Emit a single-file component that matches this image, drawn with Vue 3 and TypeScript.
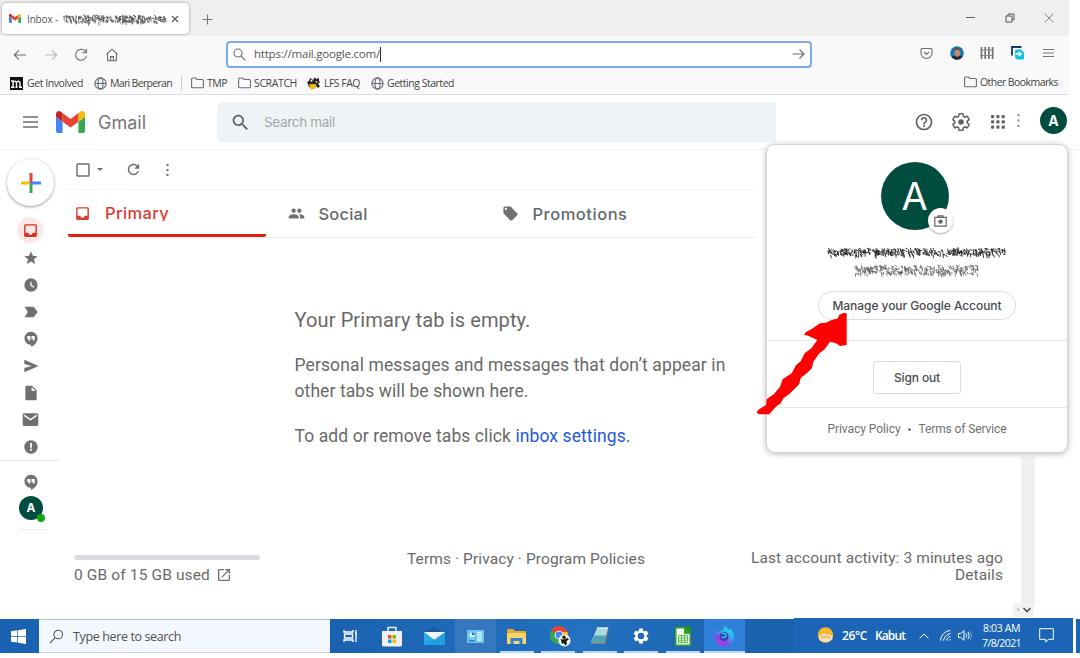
<script setup lang="ts">
import type { Directive } from 'vue'

interface RailItem { name: string; d: string; size: number }
interface Bookmark { label: string; icon: 'm' | 'globe' | 'folder' | 'bug'; cls: string; w: number }

const paths = {
  inbox: 'M19 3H4.99c-1.11 0-1.98.89-1.98 2L3 19c0 1.1.88 2 1.99 2H19c1.1 0 2-.9 2-2V5c0-1.11-.9-2-2-2zm0 12h-4c0 1.66-1.35 3-3 3s-3-1.34-3-3H4.99V5H19v10z',
  hangouts: 'M12 1C6.600 1 2.200 5.400 2.200 10.800S6.600 20.600 12 20.600V24c5.400-2.600 9.800-7.600 9.800-13.200C21.800 5.400 17.400 1 12 1zM11.200 11.600c0 1.600-.8 2.800-2.400 3.600v-2.800H6.400V7.600h4.800zm6.400 0c0 1.600-.8 2.800-2.400 3.600v-2.800h-2.400V7.600h4.800z',
  search: 'M15.500 14h-.79l-.28-.27C15.410 12.590 16 11.110 16 9.500 16 5.910 13.090 3 9.500 3S3 5.910 3 9.500 5.910 16 9.500 16c1.610 0 3.090-.59 4.230-1.570l.27.28v.79l5 4.990L20.490 19l-4.990-5zm-6 0C7.010 14 5 11.990 5 9.500S7.010 5 9.500 5 14 7.010 14 9.500 11.990 14 9.500 14z',
  refresh: 'M17.650 6.350C16.200 4.900 14.210 4 12 4c-4.420 0-7.990 3.580-7.990 8s3.570 8 7.990 8c3.730 0 6.840-2.550 7.730-6h-2.080c-.82 2.330-3.040 4-5.650 4-3.310 0-6-2.690-6-6s2.690-6 6-6c1.660 0 3.140.69 4.220 1.780L13 11h7V4l-2.350 2.350z',
  people: 'M16 11c1.660 0 2.990-1.340 2.990-3S17.660 5 16 5s-3 1.340-3 3 1.340 3 3 3zm-8 0c1.660 0 2.990-1.340 2.990-3S9.660 5 8 5 5 6.340 5 8s1.340 3 3 3zm0 2c-2.330 0-7 1.170-7 3.500V19h14v-2.500c0-2.330-4.670-3.500-7-3.500zm8 0c-.29 0-.62.02-.97.05 1.160.84 1.970 1.970 1.970 3.450V19h6v-2.500c0-2.330-4.670-3.500-7-3.500z',
  tag: 'M21.410 11.580l-9-9C12.050 2.220 11.550 2 11 2H4c-1.100 0-2 .9-2 2v7c0 .55.22 1.050.59 1.420l9 9c.36.36.86.58 1.410.58s1.050-.22 1.410-.59l7-7c.37-.36.59-.86.59-1.410s-.23-1.060-.59-1.420zM5.500 7C4.670 7 4 6.330 4 5.500S4.670 4 5.500 4 7 4.670 7 5.500 6.330 7 5.500 7z',
  gear: 'M19.430 12.980c.04-.32.07-.64.07-.98s-.03-.66-.07-.98l2.110-1.650c.19-.15.24-.42.12-.64l-2-3.460c-.12-.22-.39-.3-.61-.22l-2.490 1c-.52-.4-1.080-.73-1.690-.98l-.38-2.650C14.460 2.180 14.250 2 14 2h-4c-.25 0-.46.18-.49.42l-.38 2.650c-.61.25-1.170.59-1.690.98l-2.490-1c-.23-.09-.49 0-.61.22l-2 3.460c-.13.22-.07.49.12.64l2.110 1.650c-.04.32-.07.65-.07.98s.03.66.07.98l-2.110 1.650c-.19.15-.24.42-.12.64l2 3.460c.12.22.39.3.61.22l2.490-1c.52.4 1.080.73 1.690.98l.38 2.650c.03.24.24.42.49.42h4c.25 0 .46-.18.49-.42l.38-2.650c.61-.25 1.170-.59 1.690-.98l2.490 1c.23.09.49 0 .61-.22l2-3.460c.12-.22.07-.49-.12-.64l-2.110-1.650z',
  help: 'M11 18h2v-2h-2v2zm1-16C6.480 2 2 6.480 2 12s4.480 10 10 10 10-4.480 10-10S17.520 2 12 2zm0 18c-4.410 0-8-3.590-8-8s3.590-8 8-8 8 3.590 8 8-3.590 8-8 8zm0-14c-2.210 0-4 1.790-4 4h2c0-1.100.9-2 2-2s2 .9 2 2c0 2-3 1.750-3 5h2c0-2.250 3-2.500 3-5 0-2.210-1.790-4-4-4z',
  open: 'M19 19H5V5h7V3H5c-1.110 0-2 .9-2 2v14c0 1.100.89 2 2 2h14c1.100 0 2-.9 2-2v-7h-2v7zM14 3v2h3.590l-9.830 9.830 1.410 1.410L19 6.410V10h2V3h-7z',
}

const rail: RailItem[] = [
  { name: 'Starred', d: 'M12 17.270L18.180 21l-1.640-7.030L22 9.240l-7.190-.61L12 2 9.190 8.630 2 9.240l5.460 4.730L5.820 21z', size: 16 },
  { name: 'Snoozed', d: 'M12 2a10 10 0 1 0 0 20 10 10 0 0 0 0-20zm4.200 14.200L11 13V7h1.800v5l4.400 2.700z', size: 16 },
  { name: 'Important', d: 'M2.500 20H15c.7 0 1.300-.3 1.600-.8L22 12l-5.400-7.200C16.300 4.300 15.700 4 15 4H2.500l4.500 8z', size: 16 },
  { name: 'Chats', d: paths.hangouts, size: 16 },
  { name: 'Sent', d: 'M2 21.500L23.500 12 2 2.500V9l11 3-11 3z', size: 16 },
  { name: 'Drafts', d: 'M5.500 1C4.400 1 3.500 1.900 3.500 3v18c0 1.100.9 2 2 2h13c1.100 0 2-.9 2-2V8l-7-7h-8zm7.500 8V3l6 6z', size: 16 },
  { name: 'All mail', d: 'M21 3H3c-1.100 0-2 .9-2 2v14c0 1.100.9 2 2 2h18c1.100 0 2-.9 2-2V5c0-1.100-.9-2-2-2zm0 4.500l-9 6-9-6V5l9 6 9-6v2.500z', size: 17 },
  { name: 'Spam', d: 'M12 2C6.480 2 2 6.480 2 12s4.480 10 10 10 10-4.480 10-10S17.520 2 12 2zm1.400 15.500h-2.800v-2.800h2.800v2.800zm0-4.500h-2.800V6h2.800v7z', size: 16 },
]

const bookmarks: Bookmark[] = [
  { label: 'Get Involved', icon: 'm', cls: 'bm-a', w: 56 },
  { label: 'Mari Berperan', icon: 'globe', cls: 'bm-b', w: 62 },
  { label: 'TMP', icon: 'folder', cls: 'bm-c', w: 20 },
  { label: 'SCRATCH', icon: 'folder', cls: 'bm-d', w: 43 },
  { label: 'LFS FAQ', icon: 'bug', cls: 'bm-e', w: 36 },
  { label: 'Getting Started', icon: 'globe', cls: 'bm-f', w: 67 },
]

// Tracks a label's letters so that it spans the given number of pixels.
const vFit: Directive<HTMLElement, number> = {
  mounted(el, { value }) {
    const length = (el.textContent ?? '').trim().length
    el.style.letterSpacing = `${(value - el.getBoundingClientRect().width) / length}px`
  },
}

// Deterministic scribble that hides a private address.
function scribble(width: number, height: number, count: number, seed: number): string {
  let s = seed
  const rnd = () => {
    s = (s * 1103515245 + 12345) % 2147483648
    return s / 2147483648
  }
  let d = ''
  for (let i = 0; i < count; i++) {
    const x = rnd() * (width - 4) + 1
    const y = 1 + rnd() * (height - 4)
    const steep = rnd() < 0.5
    const dx = steep ? rnd() : 1 + rnd() * 2
    const dy = steep ? 2 + rnd() * 2 : rnd() * 2
    d += `M${x.toFixed(1)} ${y.toFixed(1)}l${dx.toFixed(1)} ${dy.toFixed(1)}`
  }
  return d
}
const tabScribble = scribble(106, 11, 260, 7)
const nameScribble = scribble(181, 11, 430, 21)
const mailScribble = scribble(127, 13, 330, 5)
</script>

<template>
  <div class="desktop">
    <div class="browser">
      <div class="tabstrip">
        <div class="tab">
          <svg class="i-tab" viewBox="52 42 88 66">
            <path d="M58 108h14V74L52 59v43c0 3.320 2.690 6 6 6" fill="#4285f4" />
            <path d="M120 108h14c3.320 0 6-2.690 6-6V59l-20 15" fill="#34a853" />
            <path d="M120 48v26l20-15v-8c0-7.420-8.470-11.650-14.400-7.200" fill="#fbbc04" />
            <path d="M72 74V48l24 18 24-18v26L96 92" fill="#ea4335" />
            <path d="M52 51v8l20 15V48l-5.600-4.200c-5.940-4.450-14.400-.22-14.400 7.200" fill="#c5221f" />
          </svg>
          <span class="tab-title"><span v-fit="31">Inbox -</span></span>
          <svg class="tab-mask" width="106" height="12"><path :d="tabScribble" stroke="#4a4a4a" stroke-width=".8" /></svg>
          <svg class="tab-close" width="8" height="8" viewBox="0 0 8 8"><path d="M1 1l6 6M7 1L1 7" stroke="#555" stroke-width="1.100" /></svg>
        </div>
        <svg class="new-tab" width="11" height="11" viewBox="0 0 11 11"><path d="M5.500 .5v10M.5 5.500h10" stroke="#777" stroke-width="1.100" /></svg>
        <div class="win">
          <span><svg width="10" height="10"><path d="M0 4.500h9" stroke="#666" /></svg></span>
          <span><svg width="10" height="10" fill="none" stroke="#555"><path d="M1 3h6v6H1zM3 2.800V1h6v6H7.200" /></svg></span>
          <span><svg width="10" height="10"><path d="M.5 .5l9 9M9.500 .5l-9 9" stroke="#777" stroke-width=".9" /></svg></span>
        </div>
      </div>

      <div class="navbar">
        <div class="nav-left">
          <span><svg width="14" height="14" viewBox="0 0 14 14" class="ln"><path d="M13 7H1.500M6 2.300L1.300 7 6 11.700" /></svg></span>
          <span><svg width="14" height="14" viewBox="0 0 14 14" class="ln dim"><path d="M1 7h11.500M8 2.300L12.700 7 8 11.700" /></svg></span>
          <span><svg width="14" height="14" viewBox="0 0 14 14" class="ln"><path d="M11.700 3.700A5.500 5.500 0 1 0 12.500 8M12.300 .8v4h-4" /></svg></span>
          <span><svg width="14" height="14" viewBox="0 0 14 14" class="ln"><path d="M1.500 6.500L7 1.200l5.500 5.300M2.600 6v6.800h8.800V6M5.500 12.800V8.600h3v4.200" /></svg></span>
        </div>
        <div class="url">
          <svg class="url-search" width="13" height="13" viewBox="0 0 13 13"><circle cx="5" cy="5" r="4" /><path d="M8 8l4.300 4.300" /></svg>
          <span class="url-text"><span v-fit="126">https://mail.google.com/</span></span><i class="caret"></i>
          <svg class="url-go" width="13" height="12" viewBox="0 0 13 12"><path d="M.5 6h11.500M7.500 1.500L12 6l-4.500 4.500" /></svg>
        </div>
        <div class="nav-right">
          <span><svg width="13" height="13" viewBox="0 0 13 13" class="ln"><path d="M2 1.500h9q1 0 1 1V6a5.500 5.500 0 0 1-11 0V2.500q0-1 1-1zM4 5l2.500 2.500L9 5" /></svg></span>
          <span><svg width="14" height="14" viewBox="0 0 14 14"><circle cx="7" cy="7" r="6.800" fill="#1579b8" /><path d="M1.500 11c1-1.500 3-1.500 5.500-1.500s4.500 0 5.500 1.500A7 7 0 0 1 1.500 11z" fill="#222c33" /><ellipse cx="7.300" cy="6.300" rx="3" ry="4.500" fill="#c08a74" /><path d="M4.300 5.500c-.3-5 6.200-5 6 0-1-2.500-5-2.500-6 0z" fill="#5d4a40" /></svg></span>
          <span><svg width="14" height="12" viewBox="0 0 14 12"><path d="M1.500 0v12M5.200 0v12M8.900 0v12M12.600 0v12" stroke="#6c6c6c" stroke-width="1.600" /><path d="M0 3h14M0 8.500h14" stroke="#8a8a8a" /></svg></span>
          <span><svg width="14" height="14" viewBox="0 0 14 14"><path d="M1 9.500V1h9.500" stroke="#12396c" stroke-width="1.800" fill="none" /><path d="M4 5q0-1.500 1.500-1.500h4.700L13 6.500V12q0 1.500-1.500 1.500H7Q4 13 4 10z" fill="#08c4dd" /><path d="M4.500 8h5M7.700 5.700L10.200 8l-2.500 2.300" stroke="#fff" stroke-width="1.400" fill="none" /></svg></span>
          <span><svg width="11" height="10"><path d="M0 1.500h11M0 5h11M0 8.500h11" stroke="#777" /></svg></span>
        </div>
      </div>

      <div class="bookmarks">
        <div v-for="b in bookmarks" :key="b.label" class="bm" :class="b.cls">
          <svg v-if="b.icon === 'm'" width="13" height="13" viewBox="0 0 13 13"><path d="M0 0h13v13H0z" fill="#111" /><path d="M1 4h2v6M1 10.200h3.500M3 6c0-2 3.500-2.500 3.500 0v4M5.500 10.200h2M6.500 6c0-2 3.500-2.500 3.500 0v4M9 10.200h3" stroke="#fff" stroke-width="1.400" fill="none" /></svg>
          <svg v-else-if="b.icon === 'globe'" width="13" height="13" viewBox="0 0 13 13" class="ln"><circle cx="6.500" cy="6.500" r="5.600" /><ellipse cx="6.500" cy="6.500" rx="2.500" ry="5.600" /><path d="M1 6.500h11" /></svg>
          <svg v-else-if="b.icon === 'folder'" width="13" height="12" viewBox="0 0 13 12" class="ln"><path d="M.6 9.800V2q0-1 1-1h2.900l1.500 1.500h5.400q1 0 1 1v6.300q0 1-1 1H1.600q-1 0-1-1z" /></svg>
          <svg v-else width="13" height="13" viewBox="0 0 13 13"><path d="M0 5l2-1 1-3 3 2 2-3 1 2 3-1v3l1 1-2 2 2 2-2 2-2-2-4 3-3-2-1-3z" fill="#262626" /><circle cx="4.500" cy="3.800" r="1" fill="#fff" /><circle cx="9.500" cy="5" r=".9" fill="#ddd" /><path d="M2.500 7h6l1 2-2 3-3 .5-2-2z" fill="#e9b91c" /></svg>
          <span v-fit="b.w">{{ b.label }}</span>
        </div>
        <div class="bm bm-other">
          <svg width="13" height="12" viewBox="0 0 13 12" class="ln"><path d="M.6 9.800V2q0-1 1-1h2.900l1.500 1.500h5.400q1 0 1 1v6.300q0 1-1 1H1.600q-1 0-1-1z" /></svg>
          <span v-fit="78">Other Bookmarks</span>
        </div>
      </div>
    </div>

    <header class="gm-head">
      <svg class="burger" width="15" height="12"><path d="M0 1h15M0 6h15M0 11h15" stroke="#6a6e72" stroke-width="1.500" /></svg>
      <svg class="i-gmail" viewBox="52 42 88 66">
        <path d="M58 108h14V74L52 59v43c0 3.320 2.690 6 6 6" fill="#4285f4" />
        <path d="M120 108h14c3.320 0 6-2.690 6-6V59l-20 15" fill="#34a853" />
        <path d="M120 48v26l20-15v-8c0-7.420-8.470-11.650-14.400-7.200" fill="#fbbc04" />
        <path d="M72 74V48l24 18 24-18v26L96 92" fill="#ea4335" />
        <path d="M52 51v8l20 15V48l-5.600-4.200c-5.940-4.450-14.400-.22-14.400 7.200" fill="#c5221f" />
      </svg>
      <div class="brand"><span v-fit="48">Gmail</span></div>
      <div class="search">
        <svg width="21" height="21" viewBox="0 0 24 24" fill="#5f6368"><path :d="paths.search" /></svg>
        <span v-fit="71">Search mail</span>
      </div>
      <div class="head-icons">
        <span><svg width="20" height="20" viewBox="0 0 24 24" fill="#5f6368"><path :d="paths.help" /></svg></span>
        <span><svg width="20" height="20" viewBox="0 0 24 24"><path :d="paths.gear" fill="none" stroke="#5f6368" stroke-width="1.800" /><circle cx="12" cy="12" r="3.300" fill="#5f6368" /></svg></span>
        <span><svg width="14" height="14" fill="#5f6368"><g v-for="r in 3" :key="r"><rect v-for="c in 3" :key="c" :x="(c - 1) * 5.3" :y="(r - 1) * 5.3" width="3.200" height="3.200" rx="1" /></g></svg></span>
      </div>
      <svg class="dots3" width="3" height="14"><path d="M.5 0h2v2h-2zM.5 5.500h2v2h-2zM.5 11h2v2h-2z" fill="#888" /></svg>
      <div class="me">A</div>
    </header>

    <main class="gm-body">
      <nav class="rail">
        <div class="compose"><svg width="20" height="20" viewBox="0 0 20 20"><path d="M8.500 0h3v10h-3z" fill="#ea4335" /><path d="M8.500 10h3v10h-3z" fill="#34a853" /><path d="M0 8.500h8.500v3H0z" fill="#fbbc04" /><path d="M10 8.500h10v3H11.500L10 10z" fill="#4285f4" /></svg></div>
        <div class="rail-on"><svg width="17" height="17" viewBox="0 0 24 24" fill="#d93025"><path :d="paths.inbox" /></svg></div>
        <div v-for="r in rail" :key="r.name" class="rail-item">
          <svg :width="r.size" :height="r.size" viewBox="0 0 24 24"><path :d="r.d" fill-rule="evenodd" /></svg>
        </div>
        <div class="rail-line"></div>
        <div class="rail-chat"><svg width="16" height="16" viewBox="0 0 24 24"><path :d="paths.hangouts" fill-rule="evenodd" /></svg></div>
        <div class="rail-me">A<i></i></div>
        <div class="rail-line short"></div>
      </nav>

      <section class="content">
        <div class="tools">
          <svg class="t-check" width="18" height="18" viewBox="0 0 24 24" fill="#707070"><path d="M19 5v14H5V5h14m0-2H5c-1.100 0-2 .9-2 2v14c0 1.100.9 2 2 2h14c1.100 0 2-.9 2-2V5c0-1.100-.9-2-2-2z" /></svg>
          <svg class="t-drop" width="6" height="3"><path d="M0 0h6L3 3z" fill="#707070" /></svg>
          <svg class="t-refresh" width="17" height="17" viewBox="0 0 24 24" fill="#707070"><path :d="paths.refresh" /></svg>
          <svg class="t-more" width="3" height="12"><path d="M.5 0h2v2h-2zM.5 5h2v2h-2zM.5 10h2v2h-2z" fill="#707070" /></svg>
        </div>
        <div class="cats">
          <div class="cat on"><svg width="17" height="17" viewBox="0 0 24 24"><path :d="paths.inbox" /></svg><span v-fit="64">Primary</span></div>
          <div class="cat"><svg width="17" height="17" viewBox="0 0 24 24"><path :d="paths.people" /></svg><span v-fit="49">Social</span></div>
          <div class="cat"><svg width="17" height="17" viewBox="0 0 24 24"><path :d="paths.tag" /></svg><span v-fit="95">Promotions</span></div>
        </div>
        <div class="empty">
          <h1><span v-fit="236">Your Primary tab is empty.</span></h1>
          <p><span v-fit="431">Personal messages and messages that don’t appear in</span><br /><span v-fit="234">other tabs will be shown here.</span></p>
          <p><span v-fit="336">To add or remove tabs click <a>inbox settings</a>.</span></p>
        </div>
        <footer class="foot">
          <div class="quota">
            <div class="bar"></div>
            <div class="used"><span v-fit="136">0 GB of 15 GB used</span><svg width="16" height="16" viewBox="0 0 24 24" fill="#707070"><path :d="paths.open" /></svg></div>
          </div>
          <div class="legal"><span v-fit="238">Terms · Privacy · Program Policies</span></div>
          <div class="activity"><span v-fit="252">Last account activity: 3 minutes ago</span><br /><span v-fit="48">Details</span></div>
        </footer>
      </section>
    </main>

    <div class="taskbar">
      <div class="start"><svg width="15" height="15" viewBox="0 0 15 15" fill="#fff"><path d="M0 2.200l6.300-.9v5.800H0zM7 1.200L15 0v7.100H7zM0 7.800h6.300v5.800L0 12.800zM7 7.800h8V15l-8-1.200z" /></svg></div>
      <div class="tb-search">
        <svg width="15" height="15" viewBox="0 0 15 15" fill="none" stroke="#555" stroke-width="1.100"><circle cx="9.200" cy="5.500" r="4.300" /><path d="M6 8.800L1 14" /></svg>
        <span v-fit="108">Type here to search</span>
      </div>
      <div class="apps">
        <div class="app"><svg width="15" height="14" viewBox="0 0 15 14" fill="none" stroke="#fff" stroke-width="1.300"><path d="M1 1v2h9V1M1 13v-2h9v2M1.500 5h8v4h-8zM13 1v12M12 4.500h2" /></svg></div>
        <div class="app"><svg width="20" height="21" viewBox="0 0 20 21"><path d="M6 6V1.500h8V6" stroke="#e8eef5" stroke-width="1.500" fill="none" /><path d="M0 5h20v14q0 1.500-1.500 1.500h-17Q0 20.500 0 19z" fill="#f1f1f1" /><path d="M6 9h3.500v3.500H6z" fill="#f25022" /><path d="M10.500 9H14v3.500h-3.500z" fill="#7fba00" /><path d="M6 13.500h3.500V17H6z" fill="#00a4ef" /><path d="M10.500 13.500H14V17h-3.500z" fill="#ffb900" /></svg></div>
        <div class="app mail"><svg width="21" height="19" viewBox="0 0 21 19"><path d="M0 6L10.500 0 21 6z" fill="#175a9f" /><path d="M0 5h21v13H0z" fill="#29a9ea" /><path d="M0 5h21l-10.500 8z" fill="#f2f6fa" /><path d="M0 18L21 6v12z" fill="#1b8fdc" opacity=".5" /></svg></div>
        <div class="app soft"><svg width="17" height="13" viewBox="0 0 17 13"><rect width="17" height="13" rx="1" fill="#6cc6f2" /><circle cx="5" cy="5" r="2.600" fill="#d7f0fb" /><path d="M5 5V2.400A2.600 2.600 0 0 1 7.600 5z" fill="#2a6db4" /><path d="M2 10h6v1.500H2z" fill="#2a7fc4" /><path d="M10 2.500h5M10 5h5M10 7.500h5M10 10h5" stroke="#e8f7fd" stroke-width="1.300" /></svg></div>
        <div class="app run"><svg width="19" height="17" viewBox="0 0 19 17"><path d="M0 2q0-1 1-1h5l2 2h10q1 0 1 1v11H0z" fill="#e8ab2c" /><path d="M0 5h19v11H0z" fill="#fbd56c" /><path d="M3.500 16v-6h12v6h-3v-3h-6v3z" fill="#2f86d4" /></svg></div>
        <div class="app run chrome"><svg width="21" height="21" viewBox="0 0 21 21"><circle cx="9" cy="9" r="9" fill="#e94335" /><path d="M9 9L1.200 4.500A9 9 0 0 0 9 18l4-6.700z" fill="#33a853" /><path d="M9 18a9 9 0 0 0 8.400-12H9l4 5.300z" fill="#fbc116" /><circle cx="9" cy="9" r="4.300" fill="#fff" /><circle cx="9" cy="9" r="3.400" fill="#4285f4" /><circle cx="14.500" cy="14.500" r="6" fill="#f4f4f4" /><circle cx="14" cy="11.200" r="1.700" fill="#1b1b1b" /><path d="M10.500 13l3 .5 4-1.500 1.500 1.500-2.500 1.500.5 3-2 1.500-1-2.500-2 1-.5-2z" fill="#1b1b1b" /></svg></div>
        <div class="app run"><svg width="18" height="18" viewBox="0 0 18 18"><path d="M6 1h12l-4 16H1z" fill="#8b7d6a" /><path d="M6 1h11l-4 14.500H0z" fill="#a9dbe0" /><path d="M3.500 8.500L0 15.500h13l2-7z" fill="#4fa3b3" /><path d="M6 1h11" stroke="#e8e8e8" stroke-width="1.500" /></svg></div>
        <div class="app run"><svg width="18" height="18" viewBox="0 0 24 24"><path :d="paths.gear" fill="#fff" /><circle cx="12" cy="12" r="4.400" fill="#1f68b5" /></svg></div>
        <div class="app run"><svg width="16" height="20" viewBox="0 0 16 20"><path d="M0 1h10l6 6v13H0z" fill="#31a51c" /><path d="M1.500 2.500H9V8h5.500v10.500h-13z" fill="#f3fbf1" /><path d="M10 0h6v6z" fill="#1f8f14" /><path d="M3.500 9.500h9v7h-9zM3.500 12h9M3.500 14.200h9M6.500 9.500v7M9.500 9.500v7" fill="none" stroke="#5cc24c" /></svg></div>
        <div class="app run hot"><svg width="20" height="20" viewBox="0 0 20 20"><defs><linearGradient id="fx" x1="0.900" y1="0" x2="0.300" y2="1"><stop offset="0" stop-color="#2fe6e0" /><stop offset=".4" stop-color="#2bb0f0" /><stop offset=".75" stop-color="#8a48e8" /><stop offset="1" stop-color="#b03be8" /></linearGradient></defs><path d="M11 0c2 1 2.500 3 4 4 .5-.5.500-1 .500-2C18.500 4 20 7 20 10.500a9.700 9.700 0 0 1-19.500 0C.5 8 1.500 5.500 3 4c.5 1 1 1.500 2 1.800C6.500 5 9.500 4 11 0z" fill="url(#fx)" /><circle cx="10" cy="10.500" r="4.500" fill="#3b3fae" /><path d="M7.500 7.500c3-1 5.500 1 4 3.300-1 1.300-3 .9-4-.1" stroke="#29c8e8" stroke-width="1.600" fill="none" /></svg></div>
      </div>
      <div class="tray">
        <svg class="sun" width="17" height="17" viewBox="0 0 17 17"><circle cx="8.500" cy="8" r="7.700" fill="#f8b62d" /><path d="M3 13.500a3 3 0 0 1 .5-5 4 4 0 0 1 6.500-.5 3 3 0 0 1 4 5.500q-5 3.500-11 0z" fill="#f7dfb6" /><path d="M4 10.800q4-2 9 0" stroke="#d9a04c" stroke-width="1.100" fill="none" /></svg>
        <div class="wx"><span v-fit="25">26°C</span></div>
        <div class="wx k"><span v-fit="30">Kabut</span></div>
        <svg class="up" width="10" height="6" viewBox="0 0 10 6"><path d="M.5 5.500L5 1l4.500 4.500" /></svg>
        <svg class="wifi" width="11" height="11" viewBox="0 0 11 11"><path d="M.5 10.500C1 5 5 1 10.500 .5M3.500 10.500c.5-3.500 3-6 7-7M6.500 10.500c.3-2 1.700-3.700 4-4M9 10.500l1.500-1.500" /></svg>
        <svg class="vol" width="14" height="11" viewBox="0 0 14 11"><path d="M.5 3.500h2.200L6 .7v9.600L2.700 7.500H.5zM8 3.500q1.300 2 0 4M10 2q2.300 3.500 0 7" /><path d="M12 .8q3 4.700 0 9.400" opacity=".4" /></svg>
        <div class="clock"><span v-fit="37">8:03 AM</span><br /><span v-fit="39">7/8/2021</span></div>
        <svg class="note" width="15" height="15" viewBox="0 0 15 15"><path d="M.7 .7h13.600v10.600H9.500L6.700 14v-2.700h-6z" /></svg>
      </div>
      <div class="edge"></div>
    </div>

    <div class="track"></div>
    <div class="track-end"><svg width="14" height="6"><path d="M6.500 1L10 4.500 13.500 1" stroke="#555" stroke-width="1.700" fill="none" /><path d="M.5 1.500L2 3.500" stroke="#777" /></svg></div>

    <aside class="popup">
      <div class="big">A<div class="cam"><svg width="13" height="12" viewBox="0 0 13 12" fill="none" stroke="#666" stroke-width="1.200"><path d="M.8 2.300h11.400v8.900H.8zM4 2V.8h5V2" /><circle cx="6.500" cy="6.600" r="2.200" fill="#666" stroke="none" /></svg></div></div>
      <svg class="mask1" width="181" height="12"><path :d="nameScribble" stroke="#2c2c2c" stroke-width=".9" /></svg>
      <svg class="mask2" width="127" height="13"><path :d="mailScribble" stroke="#555" stroke-width=".7" /></svg>
      <div class="manage"><span v-fit="169">Manage your Google Account</span></div>
      <div class="out"><div class="out-btn"><span v-fit="46">Sign out</span></div></div>
      <div class="pp"><span v-fit="73">Privacy Policy</span><b></b><span v-fit="88">Terms of Service</span></div>
    </aside>

    <svg class="arrow" width="110" height="130" viewBox="0 0 330 390">
      <path d="M290 70V165L270 168 258 160 240 155 224 178 208 190 190 215 186 234 172 248 152 264 148 282 130 300 118 312 100 325 92 340 76 352 58 373H28L20 368 24 360 48 345 50 328 72 312 90 290 98 268 125 250 138 226 152 214 164 190 184 175 202 150 176 138 162 134 168 126 186 116 210 100 228 98 245 90 262 86 268 74 280 69z" fill="#f00" />
    </svg>
  </div>
</template>

<style>
html,
body {
  margin: 0;
  background: #fff;
}
</style>

<style scoped>
.desktop {
  position: relative;
  display: flex;
  flex-direction: column;
  width: 1080px;
  height: 658px;
  overflow: hidden;
  background: #fff;
  color: #696969;
  font-family: Roboto, 'Liberation Sans', sans-serif;
  white-space: nowrap;
}
svg { display: block; flex: none; }
.browser { width: 1069px; height: 95px; font-family: 'Open Sans', 'Noto Sans', sans-serif; }
.tabstrip { display: flex; height: 36px; background: #efefef; }
.tab { display: flex; align-items: center; box-sizing: border-box; width: 187px; height: 31px; margin: 3px 0 0 2px; padding-left: 7px; border-radius: 4px; background: #fff; box-shadow: 0 0 3px rgba(0, 0, 0, 0.4); }
.i-tab { width: 12px; height: 9px; }
.tab-title { width: 35px; margin-left: 6px; color: #555; font-size: 10px; line-height: 30px; }
.tab-mask { margin-top: 2px; }
.tab-close { margin-left: 3px; }
.new-tab { margin: 14px 0 0 13px; }
.win { display: flex; align-items: center; margin: 0 1px 0 auto; }
.win span { display: flex; justify-content: center; width: 39px; }
.ln { fill: none; stroke: #6b6b75; stroke-width: 1.1; }
.dim { opacity: 0.45; }
.navbar { display: flex; align-items: center; height: 36px; background: #f9f9fb; }
.nav-left { display: flex; width: 221px; padding-left: 5px; margin-top: 1px; }
.nav-left span,
.nav-right span { display: flex; align-items: center; justify-content: center; width: 30.5px; }
.url { display: flex; align-items: center; box-sizing: border-box; width: 586px; height: 27px; padding: 0 5px; border: 2px solid #7aaaf0; border-radius: 4px; background: #fff; }
.url-search, .url-go { fill: none; stroke: #6b6b75; stroke-width: 1.1; }
.url-text { margin-left: 8px; color: #555; font-size: 11.5px; line-height: 22px; }
.caret { width: 1px; height: 15px; background: #333; }
.url-go { margin-left: auto; }
.nav-right { display: flex; align-items: center; height: 34px; margin: 0 0 2px 99px; }
.bookmarks { display: flex; align-items: center; box-sizing: border-box; height: 23px; padding-left: 10px; border-bottom: 1px solid #dedee2; background: #f9f9fb; }
.bm { display: flex; align-items: center; gap: 4px; color: #444; font-size: 10.5px; line-height: 20px; }
.bm-a { width: 84px; }
.bm-b { gap: 3px; width: 87px; height: 15px; margin-right: 9px; border-right: 1px solid #ccccd2; }
.bm-c { width: 47px; gap: 3px; }
.bm-d { width: 69px; gap: 3px; }
.bm-e { width: 64px; }
.bm-f { gap: 3px; }
.bm-other { gap: 3px; margin: 0 11px 2px auto; }

.gm-head { display: flex; align-items: center; box-sizing: border-box; height: 55px; border-bottom: 1px solid #f3f3f3; }
.burger { margin-left: 23px; }
.i-gmail { width: 29px; height: 22px; margin-left: 18px; }
.brand { width: 119px; margin: 2px 0 0 13px; color: #72767a; font: 18px/40px Inter, sans-serif; }
.search { display: flex; align-items: center; width: 559px; height: 40px; border-radius: 6px 0 0 6px; background: #eff3f5; color: #a3a7aa; font: 13.5px/42px Inter, sans-serif; }
.search svg { margin: 0 13px 0 13px; }
.head-icons { display: flex; margin-left: 129px; }
.head-icons span { display: flex; align-items: center; justify-content: center; width: 37.3px; }
.dots3 { margin-top: -3px; }
.me { width: 27px; height: 27px; margin: -4px 0 0 20px; border-radius: 50%; background: #004d40; color: #fff; font: 700 14px/27px Inter, sans-serif; text-align: center; }

.gm-body { display: flex; height: 469px; }
.rail { display: flex; flex-direction: column; width: 62px; fill: #707070; }
.compose { display: flex; align-items: center; justify-content: center; width: 47px; height: 47px; margin: 9px 0 0 7px; border-radius: 50%; box-shadow: 0 1px 3px rgba(0, 0, 0, 0.4); }
.rail-on { display: flex; align-items: center; justify-content: center; width: 26px; height: 26px; margin: 11px 0 1px 17px; border-radius: 50%; background: #fce8e6; }
.rail-item { display: flex; align-items: center; justify-content: center; width: 61px; height: 27px; }
.rail-line { width: 60px; height: 1px; background: #ebebeb; }
.rail-chat { display: flex; justify-content: center; width: 61px; margin-top: 13px; }
.rail-me { position: relative; width: 24px; height: 24px; margin: 6px 0 9px 19px; border-radius: 50%; background: #004d40; color: #fff; font: 700 12px/24px Inter, sans-serif; text-align: center; }
.rail-me i { position: absolute; left: 18px; top: 18px; width: 8px; height: 8px; border-radius: 50%; background: #12a812; }
.short { width: 28px; margin-left: 19px; }

.content { display: flex; flex-direction: column; width: 1018px; }
.tools { display: flex; align-items: center; box-sizing: border-box; width: 695px; height: 40px; padding-left: 12px; border-bottom: 1px solid #f3f3f3; }
.t-drop { margin-left: 5px; }
.t-refresh { margin-left: 22px; }
.t-more { margin-left: 24px; }
.cats { display: flex; box-sizing: border-box; width: 695px; height: 48px; padding-left: 6px; border-bottom: 1px solid #f0f0f0; }
.cat { display: flex; align-items: center; box-sizing: border-box; width: 198px; height: 47px; margin-right: 16px; padding-left: 6px; color: #65696d; fill: #707070; font: 500 16.5px/44px Inter, sans-serif; }
.cat svg { margin-right: 13.5px; }
.cat.on { border-bottom: 3px solid #dd1f12; border-radius: 2px; color: #dc3a30; fill: #dc3a30; line-height: 46px; }
.cat.on svg { margin-top: 3px; margin-right: 14px; }
.cat.on span { margin-top: 2px; clip-path: inset(0 0 15px 0); }
.empty { height: 257px; padding: 69px 0 0 232.5px; box-sizing: border-box; margin-bottom: 60px; }
h1 { margin: 0; font-size: 20px; font-weight: 400; line-height: 26px; }
p { margin: 19px 0 0; font-size: 17.5px; line-height: 26px; }
a { color: #2259dc; }
.foot { display: flex; width: 941px; font-size: 15.5px; }
.quota { width: 186px; margin-left: 12px; }
.bar { height: 5px; border-radius: 3px; background: #dadce0; }
.used { display: flex; align-items: center; gap: 6px; margin-top: 5px; line-height: 20px; }
.legal { margin-left: 147px; line-height: 8px; }
.activity { margin-left: auto; margin-top: -5px; line-height: 17px; text-align: right; }

.taskbar { display: flex; height: 34px; color: #fff; font-family: 'Open Sans', 'Noto Sans', sans-serif; }
.start { display: flex; align-items: center; justify-content: center; box-sizing: border-box; width: 39px; padding-right: 2px; background: #1b63b2; }
.tb-search { display: flex; align-items: center; box-sizing: border-box; width: 291px; gap: 9px; padding-left: 10px; border-top: 1px solid #b9bdc2; border-bottom: 1px solid #c9d2dc; background: #f3f8fe; color: #505050; font-size: 12.5px; }
.apps { display: flex; width: 464px; background: linear-gradient(90deg, #1a62b0, #2371c0 55%, #1c64b0 85%, #1a62ae); }
.app { display: flex; align-items: center; justify-content: center; box-sizing: border-box; width: 41.5px; height: 34px; }
.app.mail { padding-left: 2px; }
.app.chrome { padding-left: 4px; }
.app.soft { background: #3677bf; }
.run { background: linear-gradient(#b9d9f8, #b9d9f8) center bottom / 34px 2px no-repeat; }
.hot { background: linear-gradient(#b9d9f8, #b9d9f8) center bottom / 41px 2px no-repeat #2f80d8; }
.tray { display: flex; align-items: center; box-sizing: border-box; width: 279px; height: 35px; margin-top: -1px; padding-left: 23px; background: #1c65b6; fill: none; stroke: #fff; }
.sun { stroke: none; }
.wx { width: 33px; margin-left: 8px; font-size: 12px; font-weight: 600; }
.k { width: 44px; margin-left: 0; }
.wifi { margin-left: 11px; }
.vol { margin-left: 7px; }
.clock { width: 39px; margin-left: 10px; font-size: 10.5px; line-height: 15px; text-align: center; }
.note { margin-left: 18px; }
.edge { width: 4px; margin-left: 3px; background: #1c65b6; }

.track { position: absolute; left: 1021px; top: 457px; width: 14px; height: 147px; background: #f0f0f0; }
.track-end { position: absolute; left: 1013px; top: 603px; display: flex; align-items: center; justify-content: flex-end; width: 21px; height: 14px; padding-right: 3px; box-sizing: border-box; background: #f1f1f1; }
.popup { position: absolute; left: 767px; top: 145px; display: flex; flex-direction: column; align-items: center; box-sizing: border-box; width: 300px; height: 307px; padding-top: 17px; border-radius: 8px; background: #fff; box-shadow: 0 0 0 1px #d4d4d4, 0 1px 6px 1px rgba(0, 0, 0, 0.28); }
.big { position: relative; width: 68px; height: 68px; margin-right: 5px; border-radius: 50%; background: #004d40; color: #fff; font: 38px/69px Inter, sans-serif; text-align: center; }
.cam { position: absolute; left: 47px; top: 46px; display: flex; align-items: center; justify-content: center; width: 25px; height: 25px; border-radius: 50%; background: #fff; box-shadow: 0 1px 2px rgba(0, 0, 0, 0.35); }
.mask1 { margin-top: 17px; }
.mask2 { margin-top: 5px; }
.manage { box-sizing: border-box; width: 198px; height: 29px; margin-top: 14px; border: 1px solid #dadce0; border-radius: 15px; color: #484b4e; font: 500 12px/27px Inter, sans-serif; text-align: center; }
.out { display: flex; align-items: center; justify-content: center; box-sizing: border-box; width: 300px; height: 68px; margin-top: 20px; padding-top: 7px; border: solid #e8e8e8; border-width: 1px 0; }
.out-btn { box-sizing: border-box; width: 88px; height: 33px; border: 1px solid #dadce0; border-radius: 3px; color: #484b4e; font: 500 12px/31px Inter, sans-serif; text-align: center; }
.pp { display: flex; align-items: center; justify-content: center; height: 42px; color: #707070; font-size: 12px; }
.pp b { width: 3px; height: 3px; margin: 0 7.5px; border-radius: 50%; background: #777; }
.arrow { position: absolute; left: 750px; top: 290px; }
</style>
